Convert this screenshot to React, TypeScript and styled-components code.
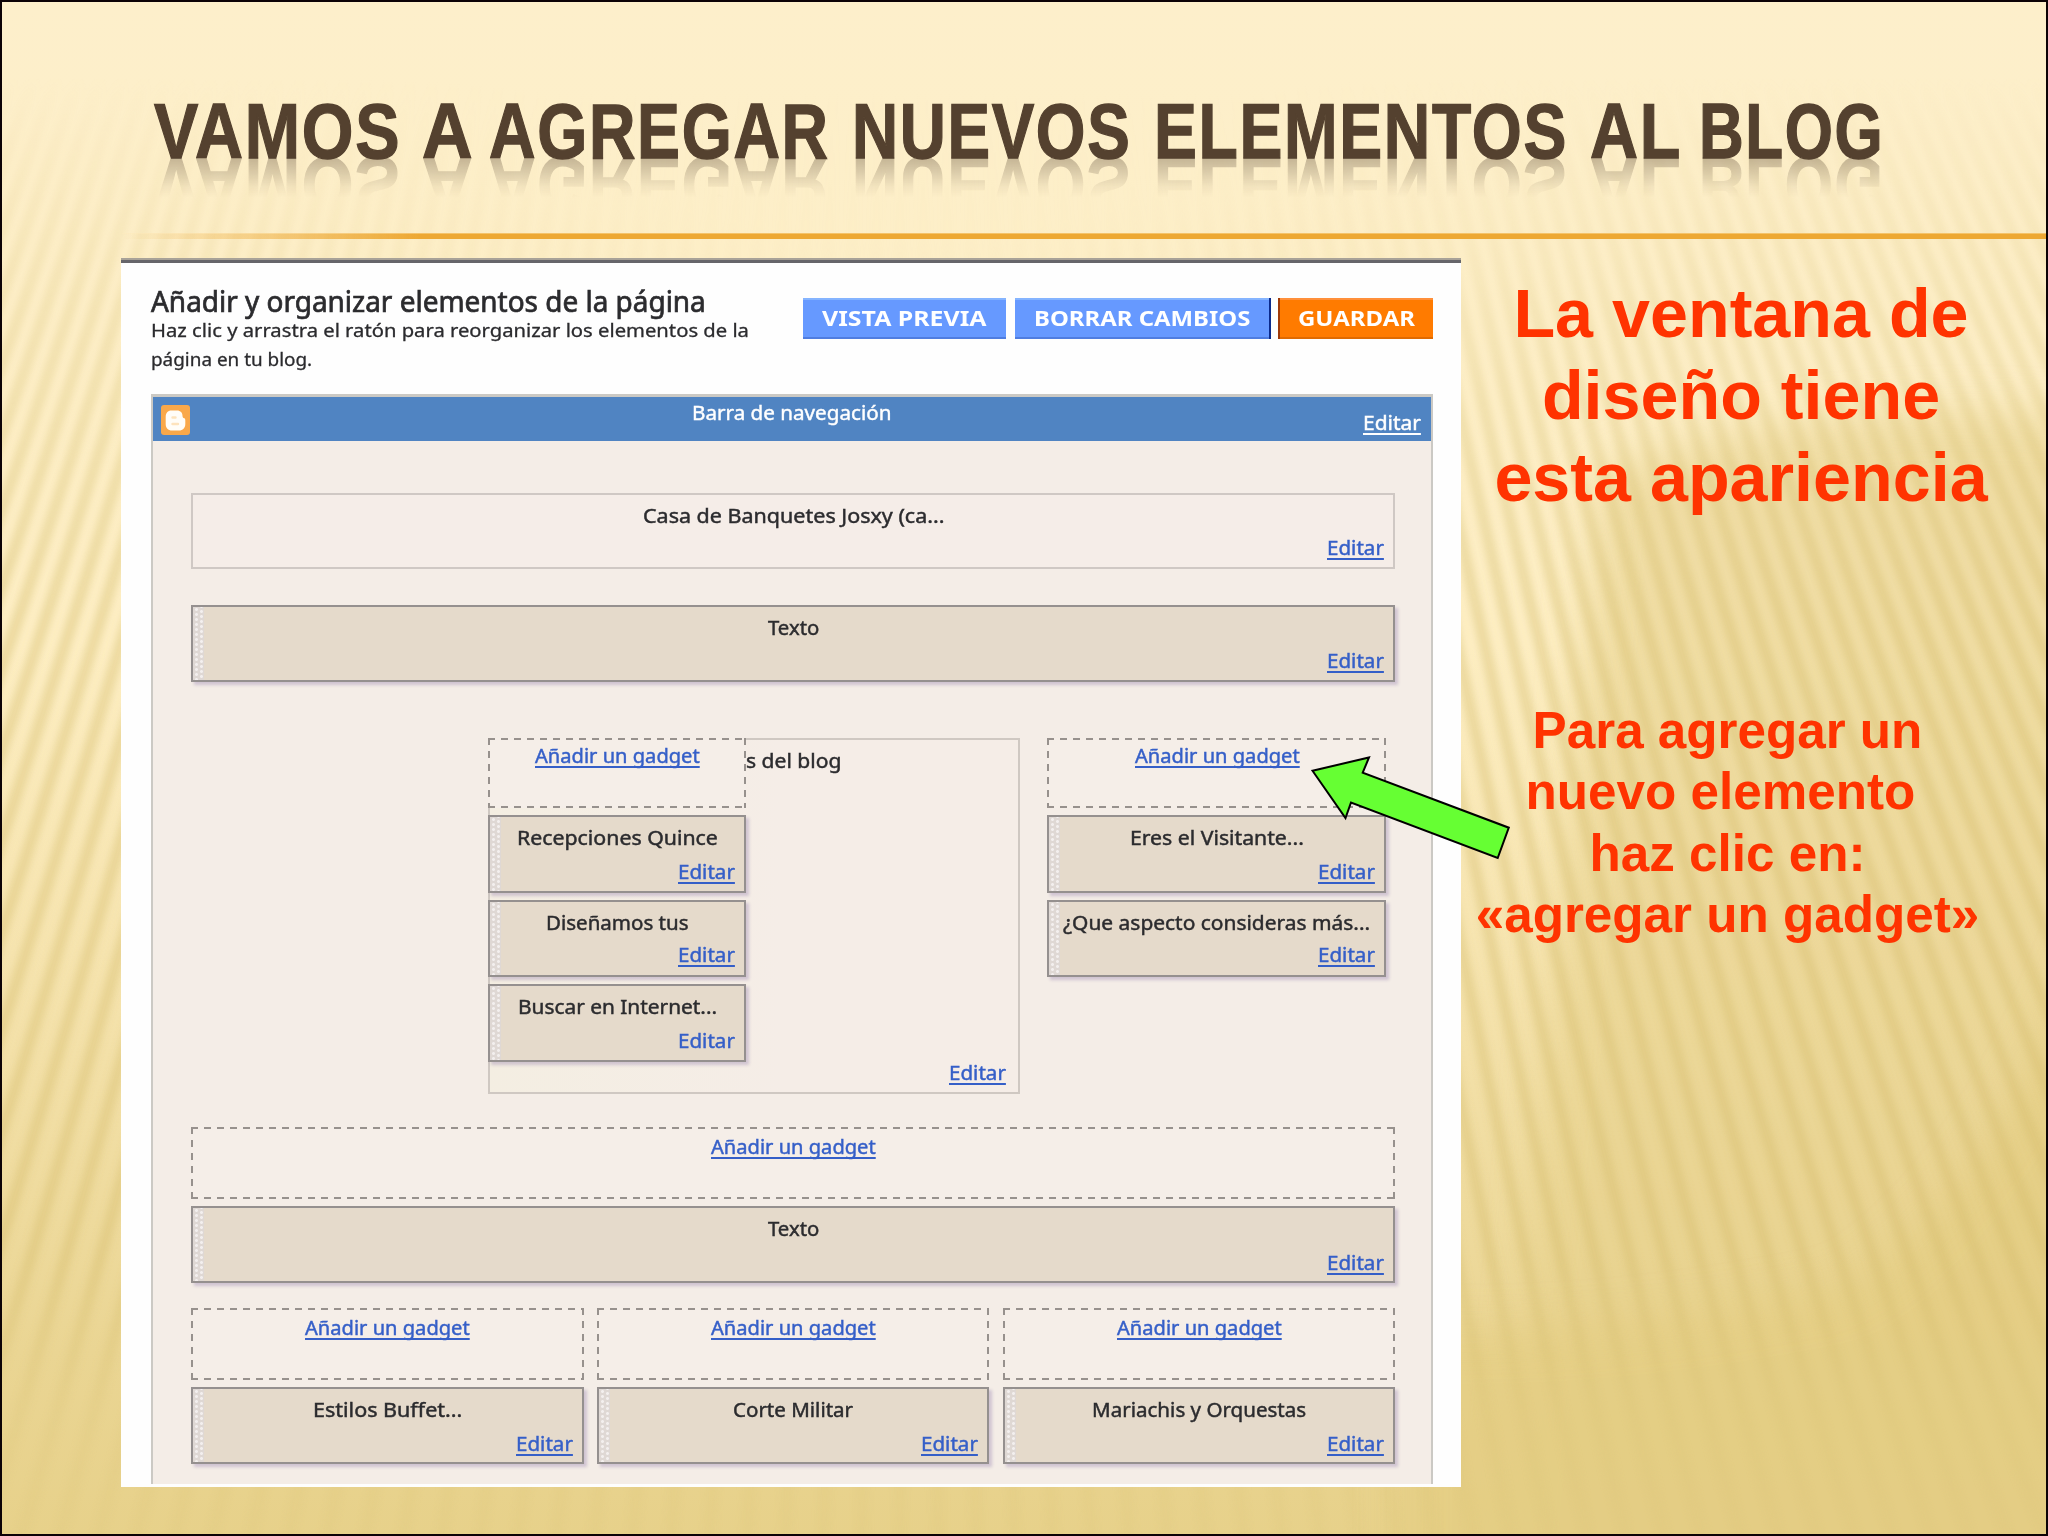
import React, { ReactNode, useLayoutEffect, useRef, useState } from "react";
import styled, { createGlobalStyle, css } from "styled-components";

const GlobalStyle = createGlobalStyle`
  * { box-sizing: border-box; }
  body { margin: 0; background: #000; }
`;

const uiFont = `"Noto Sans", "Open Sans", sans-serif`;

/* ---------- text stretched to a known measure ---------- */

const FitBox = styled.span<{ $w: number }>`
  display: block;
  flex: none;
  width: ${(p) => p.$w}px;
  white-space: nowrap;
  text-align: left;
`;
const FitInner = styled.span`
  display: inline-block;
  transform-origin: 0 50%;
`;

function Fit({ w, children }: { w: number; children: ReactNode }) {
  const ref = useRef<HTMLSpanElement>(null);
  const [scale, setScale] = useState(1);
  useLayoutEffect(() => {
    if (ref.current) setScale(w / ref.current.offsetWidth);
  }, [w]);
  return (
    <FitBox $w={w}>
      <FitInner ref={ref} style={{ transform: `scaleX(${scale})` }}>
        {children}
      </FitInner>
    </FitBox>
  );
}

/* ---------- slide ---------- */

const Slide = styled.main`
  position: relative;
  width: 2048px;
  height: 1536px;
  overflow: hidden;
  border: 2px solid #0c0206;
  display: flex;
  flex-direction: column;
  isolation: isolate;
`;

const Backdrop = styled.svg`
  position: absolute;
  inset: 0;
  z-index: -1;
`;

const Header = styled.header`
  height: 231px;
  padding: 90px 0 0 152px;
`;

const Title = styled.h1`
  margin: 0;
  width: 1740px;
  height: 78px;
  display: flex;
  font: bold 78px/78px "Liberation Sans Narrow", "Liberation Sans", sans-serif;
  color: #54412f;
  -webkit-text-stroke: 1.3px #54412f;
  -webkit-box-reflect: below -24px
    linear-gradient(to bottom, transparent 34%, rgba(0, 0, 0, 0.06) 48%, rgba(0, 0, 0, 0.34) 86%);
`;
const Word = styled.span<{ $gap: number }>`
  display: block;
  margin-right: ${(p) => p.$gap}px;
  letter-spacing: 2px;
`;

const Rule = styled.div`
  height: 6px;
  flex: none;
  margin-left: 120px;
  background: linear-gradient(90deg, rgba(237, 168, 51, 0), #eda833 300px);
  border-top: 1px solid rgba(255, 235, 190, 0.4);
`;

const Main = styled.div`
  display: flex;
  margin-top: 19px;
  padding-left: 119px;
`;

/* ---------- layout editor panel ---------- */

const Panel = styled.section`
  width: 1340px;
  height: 1229px;
  flex: none;
  background: #fefefe;
  border-top: 2px solid #a8a298;
  box-shadow: inset 0 3px 0 #66656a;
  padding-top: 3px;
  font-family: ${uiFont};
  color: #2b2b2e;
`;

const PanelHead = styled.div`
  height: 131px;
  display: flex;
  justify-content: space-between;
  padding: 0 28px 0 30px;
`;
const Intro = styled.div`
  padding-top: 22.5px;
`;
const Heading = styled.h2`
  margin: 0;
  font-size: 28.5px;
  line-height: 30px;
  font-weight: 400;
  -webkit-text-stroke: 0.7px;
`;
const Hint = styled.div`
  font-size: 18.2px;
  line-height: 29.7px;
  -webkit-text-stroke: 0.3px;
`;

const Buttons = styled.div`
  display: flex;
  padding-top: 35px;
`;
const Button = styled.button<{ $tone: "blue" | "orange"; $w: number; $gap?: number; $edge?: "l" | "r" }>`
  width: ${(p) => p.$w}px;
  height: 41px;
  margin: 0 ${(p) => p.$gap || 0}px 0 0;
  padding: 0 0 1px;
  border: 0 solid;
  display: flex;
  align-items: center;
  justify-content: center;
  color: #fff;
  font: bold 20.5px/24px ${uiFont};
  background: ${(p) => (p.$tone === "blue" ? "#6699ff" : "#ff7b00")};
  border-top: 2px solid ${(p) => (p.$tone === "blue" ? "#85b4ff" : "#ff8f3a")};
  border-bottom: 2px solid ${(p) => (p.$tone === "blue" ? "#4f7de0" : "#e06a00")};
  ${(p) => p.$edge === "r" && css`box-shadow: 2px 0 0 #0b2a8c;`}
  ${(p) => p.$edge === "l" && css`box-shadow: -2px 0 0 #a03a08;`}
`;

const Frame = styled.div`
  width: 1282px;
  height: 1090px;
  margin-left: 30px;
  border: 2px solid #cbc9c4;
  border-top-width: 3px;
  border-bottom: 0;
  background: #f4ede7;
`;

const NavBar = styled.div`
  height: 44px;
  display: grid;
  grid-template-columns: 1fr auto 1fr;
  padding: 0 10px 0 8px;
  background: #5084c2;
  color: #fff;
  font-size: 19.5px;
  line-height: 24px;
  -webkit-text-stroke: 0.4px;
`;
const NavTitle = styled.div`
  padding-top: 4.4px;
`;
const NavLogo = styled.div`
  padding-top: 8px;
  line-height: 0;
`;
const NavEdit = styled.div`
  padding-top: 14px;
  justify-self: end;
`;

const Body = styled.div`
  padding: 52px 36px 0 38px;
`;

const Link = styled.a<{ $color?: string }>`
  display: block;
  color: ${(p) => p.$color || "#355fc8"};
  font-size: 19.5px;
  line-height: 24px;
  -webkit-text-stroke: 0.45px;
  u {
    text-decoration: underline;
    text-decoration-thickness: 2px;
    text-decoration-skip-ink: none;
    text-underline-offset: 3px;
  }
`;

const Card = styled.div<{ $h: number; $mt?: number; $fixed?: boolean }>`
  height: ${(p) => p.$h}px;
  margin-top: ${(p) => p.$mt || 0}px;
  padding: 9px 9px 0;
  display: flex;
  flex-direction: column;
  align-items: center;
  font-size: 19.5px;
  line-height: 24px;
  -webkit-text-stroke: 0.45px;
  border: 2px solid #cfc8c4;
  background: #f5ede8;
  ${(p) =>
    !p.$fixed &&
    css`
      border-color: #95908f;
      background-color: #e5dacb;
      background-image: radial-gradient(circle at 1.5px 1.5px, #f3efee 1.1px, transparent 1.8px),
        radial-gradient(circle at 1.5px 1.5px, #f3efee 1.1px, transparent 1.8px),
        linear-gradient(90deg, #dfd8d4 11px, transparent 11px);
      background-size: 5px 5px, 5px 5px, 100% 100%;
      background-position: 2px 1px, 7px 3px, 0 0;
      background-repeat: repeat-y, repeat-y, no-repeat;
      box-shadow: 3px 3px 3px rgba(130, 110, 165, 0.32);
    `}
`;
const EditSlot = styled.div<{ $mt: number }>`
  align-self: flex-end;
  margin-top: ${(p) => p.$mt}px;
`;

const Dashed = styled.div<{ $h: number; $pt: number; $mt?: number }>`
  height: ${(p) => p.$h}px;
  margin-top: ${(p) => p.$mt || 0}px;
  padding: ${(p) => p.$pt}px 0 0 1px;
  display: flex;
  justify-content: center;
  background: repeating-linear-gradient(90deg, #97918d 0 7px, transparent 7px 13px) 0 0 / 100% 2px no-repeat,
    repeating-linear-gradient(90deg, #97918d 0 7px, transparent 7px 13px) 0 100% / 100% 2px no-repeat,
    repeating-linear-gradient(180deg, #97918d 0 7px, transparent 7px 13px) 0 0 / 2px 100% no-repeat,
    repeating-linear-gradient(180deg, #97918d 0 7px, transparent 7px 13px) 100% 0 / 2px 100% no-repeat,
    #f5eee8;
`;

const MidRow = styled.div`
  display: flex;
  gap: 27px;
  margin-top: 56px;
  padding-left: 297px;
`;
const BlogBox = styled.div`
  width: 532px;
  height: 356px;
  display: flex;
  border: 2px solid #cfc8c2;
  background: linear-gradient(90deg, #f4eee2, #f5ede7 55%);
`;
const Stack = styled.div<{ $w: number; $over?: boolean }>`
  width: ${(p) => p.$w}px;
  flex: none;
  ${(p) => p.$over && css`margin: -2px 0 0 -2px;`}
`;
const BlogRest = styled.div`
  flex: 1;
  display: flex;
  flex-direction: column;
  justify-content: space-between;
  padding: 8.5px 12px 7px 0;
  font-size: 19.5px;
  line-height: 24px;
  -webkit-text-stroke: 0.45px;
`;
const Right = styled.div`
  align-self: flex-end;
`;

const Columns = styled.div`
  display: grid;
  grid-template-columns: repeat(3, 392.5px);
  justify-content: space-between;
  margin-top: 25px;
`;

/* ---------- side notes ---------- */

const Notes = styled.aside`
  padding-top: 15.4px;
  font-family: "Liberation Sans", Arial, sans-serif;
  font-weight: bold;
  color: #ff3300;
  text-align: center;
  white-space: nowrap;
`;
const NoteBig = styled.p`
  margin: 0;
  width: 560px;
  font-size: 68.27px;
  line-height: 81.8px;
`;
const NoteSmall = styled.p`
  margin: 181px 0 0;
  width: 533px;
  font-size: 51.2px;
  line-height: 61.5px;
`;

const Pointer = styled.svg`
  position: absolute;
  left: 1298px;
  top: 748px;
`;

/* ---------- pieces ---------- */

function Edit({ w = 57, plain, color }: { w?: number; plain?: boolean; color?: string }) {
  return (
    <Link $color={color}>
      <Fit w={w}>{plain ? "Editar" : <u>Editar</u>}</Fit>
    </Link>
  );
}

function Gadget({ text, w, h = 77, mt, fixed, gap = 8, plain }: {
  text: string; w: number; h?: number; mt?: number; fixed?: boolean; gap?: number; plain?: boolean;
}) {
  return (
    <Card $h={h} $mt={mt} $fixed={fixed}>
      <Fit w={w}>{text}</Fit>
      <EditSlot $mt={gap}>
        <Edit plain={plain} />
      </EditSlot>
    </Card>
  );
}

function AddGadget({ h, pt, mt }: { h: number; pt: number; mt?: number }) {
  return (
    <Dashed $h={h} $pt={pt} $mt={mt}>
      <Link>
        <Fit w={165}>
          <u>Añadir un gadget</u>
        </Fit>
      </Link>
    </Dashed>
  );
}

const words: [string, number, number][] = [
  ["VAMOS", 247, 21],
  ["A", 52, 15],
  ["AGREGAR", 341, 22],
  ["NUEVOS", 279, 23],
  ["ELEMENTOS", 414, 22],
  ["AL", 92, 17],
  ["BLOG", 185, 0],
];

function stripes() {
  const out: string[] = [];
  for (let i = -64; i <= 72; i++) {
    const pts: string[] = [];
    for (let y = 60; y <= 1560; y += 50) {
      const s = 21.5 * Math.exp(0.00042 * y - 0.00000003 * y * y);
      pts.push(`${(900 + i * s).toFixed(1)},${y}`);
    }
    out.push("M" + pts.join("L"));
  }
  return out;
}

function Background() {
  return (
    <Backdrop width="2044" height="1532" viewBox="2 2 2044 1532">
      <defs>
        <linearGradient id="base" x1="0" y1="0" x2="0" y2="1">
          <stop offset="0" stopColor="#fdefcb" />
          <stop offset="0.42" stopColor="#fdeec3" />
          <stop offset="0.62" stopColor="#f6e4af" />
          <stop offset="0.88" stopColor="#ead593" />
          <stop offset="1" stopColor="#e7d18a" />
        </linearGradient>
        <linearGradient id="fadeY" x1="0" y1="0" x2="0" y2="1">
          <stop offset="0.05" stopColor="#000" />
          <stop offset="0.2" stopColor="#888" />
          <stop offset="0.4" stopColor="#eee" />
          <stop offset="0.82" stopColor="#eee" />
          <stop offset="0.92" stopColor="#555" />
          <stop offset="1" stopColor="#333" />
        </linearGradient>
        <radialGradient id="clear" gradientUnits="userSpaceOnUse" cx="900" cy="60" r="900" gradientTransform="translate(0 30) scale(1 .5)">
          <stop offset="0.4" stopColor="#000" stopOpacity="0.9" />
          <stop offset="1" stopColor="#000" stopOpacity="0" />
        </radialGradient>
        <mask id="fade">
          <rect width="2048" height="1536" fill="url(#fadeY)" />
          <rect width="2048" height="1536" fill="url(#clear)" />
        </mask>
        <filter id="soft" x="-10%" y="-10%" width="120%" height="120%">
          <feGaussianBlur stdDeviation="3.5" />
        </filter>
        <filter id="haze" x="-30%" y="-30%" width="160%" height="160%">
          <feGaussianBlur stdDeviation="22" />
        </filter>
      </defs>
      <rect width="2048" height="1536" fill="url(#base)" />
      <path d="M1600 470Q1850 390 2100 420V1600H1500Z" fill="#e6d08a" opacity="0.55" filter="url(#haze)" />
      <path d="M2100 900Q2000 1200 1840 1290Q1600 1340 1400 1330V1600H2100Z" fill="#e4cd82" opacity="0.7" filter="url(#haze)" />
      <g mask="url(#fade)">
        <g filter="url(#soft)" fill="none" stroke="#d3bc6c" strokeWidth="12" strokeOpacity="0.42">
          {stripes().map((d, i) => (
            <path key={i} d={d} />
          ))}
        </g>
      </g>
    </Backdrop>
  );
}

function Logo() {
  return (
    <svg width="29" height="30" viewBox="0 0 29 30">
      <rect width="29" height="30" rx="3" fill="#f9a84a" />
      <path
        d="M10.500 5.500h5.500c3.500 0 5.500 2.300 5.500 5.200 0 1.600.6 2.300 1.800 2.600.8.300 1 1 1 2.200v3.500c0 4-2.500 6.500-6.300 6.500h-7c-4 0-6.300-2.500-6.300-6.500v-7c0-4 2-6.500 5.800-6.500z"
        fill="#fffdf8"
      />
      <path d="M11.500 12.500h3M11.500 19h5.500" stroke="#fde3bd" strokeWidth="2.400" strokeLinecap="round" />
    </svg>
  );
}

export default function App() {
  return (
    <>
      <GlobalStyle />
      <Slide>
        <Background />
        <Header>
          <Title>
            {words.map(([t, w, g]) => (
              <Word key={t} $gap={g}>
                <Fit w={w}>{t}</Fit>
              </Word>
            ))}
          </Title>
        </Header>
        <Rule />
        <Main>
          <Panel>
            <PanelHead>
              <Intro>
                <Heading>
                  <Fit w={555}>Añadir y organizar elementos de la página</Fit>
                </Heading>
                <Hint>
                  <Fit w={598}>Haz clic y arrastra el ratón para reorganizar los elementos de la</Fit>
                  <Fit w={161}>página en tu blog.</Fit>
                </Hint>
              </Intro>
              <Buttons>
                <Button $tone="blue" $w={203} $gap={9}>
                  <Fit w={165}>VISTA PREVIA</Fit>
                </Button>
                <Button $tone="blue" $w={254} $gap={11} $edge="r">
                  <Fit w={217}>BORRAR CAMBIOS</Fit>
                </Button>
                <Button $tone="orange" $w={153} $edge="l">
                  <Fit w={117}>GUARDAR</Fit>
                </Button>
              </Buttons>
            </PanelHead>
            <Frame>
              <NavBar>
                <NavLogo>
                  <Logo />
                </NavLogo>
                <NavTitle>
                  <Fit w={199}>Barra de navegación</Fit>
                </NavTitle>
                <NavEdit>
                  <Edit w={58} color="#fff" />
                </NavEdit>
              </NavBar>
              <Body>
                <Gadget text="Casa de Banquetes Josxy (ca..." w={301} h={76} fixed />
                <Gadget text="Texto" w={51} mt={36} gap={9} />
                <MidRow>
                  <BlogBox>
                    <Stack $w={258} $over>
                      <AddGadget h={70} pt={6.4} />
                      <Gadget text="Recepciones Quince" w={201} h={78} mt={7} gap={10} />
                      <Gadget text="Diseñamos tus" w={142} mt={7} />
                      <Gadget text="Buscar en Internet..." w={199} h={78} mt={7} gap={10} plain />
                    </Stack>
                    <BlogRest>
                      <Fit w={95}>s del blog</Fit>
                      <Right>
                        <Edit />
                      </Right>
                    </BlogRest>
                  </BlogBox>
                  <Stack $w={339}>
                    <AddGadget h={70} pt={6.4} />
                    <Gadget text="Eres el Visitante..." w={174} h={78} mt={7} gap={10} />
                    <Gadget text="¿Que aspecto consideras más..." w={307} mt={7} />
                  </Stack>
                </MidRow>
                <AddGadget h={72} pt={8} mt={33} />
                <Gadget text="Texto" w={51} mt={7} gap={10} />
                <Columns>
                  {([["Estilos Buffet...", 149], ["Corte Militar", 120], ["Mariachis y Orquestas", 214]] as [string, number][]).map(
                    ([t, w]) => (
                      <Stack key={t} $w={392.5}>
                        <AddGadget h={72} pt={8} />
                        <Gadget text={t} w={w} mt={7} gap={10} />
                      </Stack>
                    )
                  )}
                </Columns>
              </Body>
            </Frame>
          </Panel>
          <Notes>
            <NoteBig>
              La ventana de
              <br />
              diseño tiene
              <br />
              esta apariencia
            </NoteBig>
            <NoteSmall>
              Para agregar un
              <br />
              nuevo elemento&nbsp;
              <br />
              haz clic en:
              <br />
              «agregar un gadget»
            </NoteSmall>
          </Notes>
        </Main>
        <Pointer width="220" height="120" viewBox="1300 750 220 120">
          <path
            d="M1312.500 770.700L1369 757.500L1362.700 772.700L1508.800 827.700L1497.700 858L1351 802.500L1345.500 818Z"
            fill="#66ff33"
            stroke="#000"
            strokeWidth="2"
          />
        </Pointer>
      </Slide>
    </>
  );
}
